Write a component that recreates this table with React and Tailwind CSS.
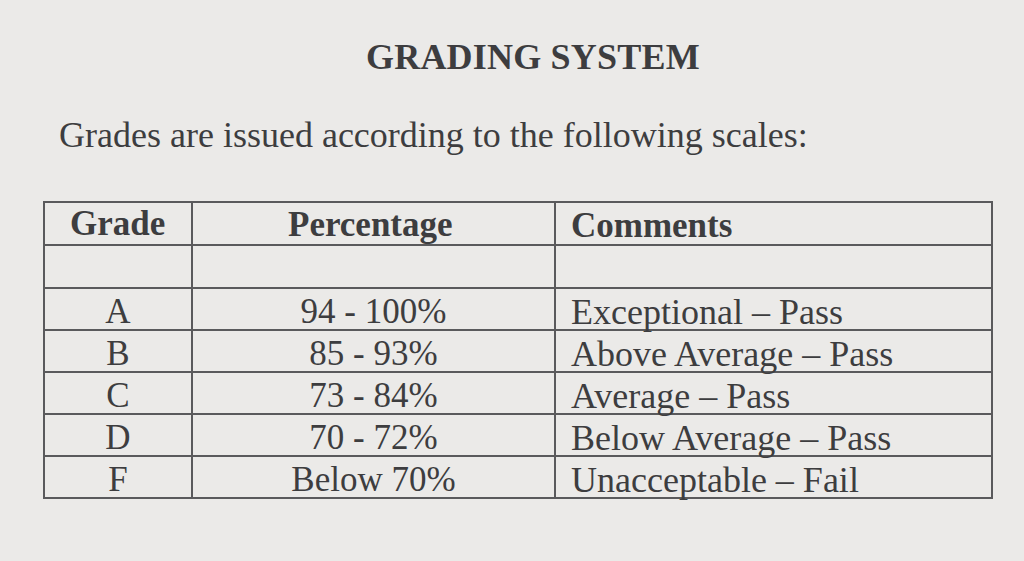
export default function App() {
  const rows = [
    ['A', '94 - 100%', 'Exceptional – Pass'],
    ['B', '85 - 93%', 'Above Average – Pass'],
    ['C', '73 - 84%', 'Average – Pass'],
    ['D', '70 - 72%', 'Below Average – Pass'],
    ['F', 'Below 70%', 'Unacceptable – Fail'],
  ]

  return (
    <div
      className="w-[1024px] h-[561px] overflow-hidden bg-[#ebeae8] text-[#3d3d3f]"
      style={{ fontFamily: '"Liberation Serif", "Times New Roman", serif' }}
    >
      <h1 className="pt-[35px] pl-[366px] text-[36px] leading-[44px] font-bold tracking-[0.2px]">
        GRADING SYSTEM
      </h1>
      <p className="mt-[36px] pl-[59px] text-[36px] leading-[40px]">
        Grades are issued according to the following scales:
      </p>
      <table className="mt-[46px] ml-[43px] w-[950px] border-collapse">
        <thead>
          <tr className="h-[43px]">
            <th className="w-[148px] border-2 border-[#5a5a5c] pl-[25px] text-left align-top pt-[3px] text-[35px] leading-[36px] font-bold">
              Grade
            </th>
            <th className="w-[363px] border-2 border-[#5a5a5c] pl-[95px] text-left align-top pt-[4px] text-[35px] leading-[36px] font-bold">
              Percentage
            </th>
            <th className="border-2 border-[#5a5a5c] pl-[15px] text-left align-top pt-[5px] text-[35px] leading-[36px] font-bold">
              Comments
            </th>
          </tr>
        </thead>
        <tbody>
          <tr className="h-[43px]">
            <td className="border-2 border-[#5a5a5c]"></td>
            <td className="border-2 border-[#5a5a5c]"></td>
            <td className="border-2 border-[#5a5a5c]"></td>
          </tr>
          {rows.map(([g, p, c]) => (
            <tr key={g} className="h-[42px]">
              <td className="border-2 border-[#5a5a5c] text-center align-top text-[35px] leading-[34px] pt-[6px]">{g}</td>
              <td className="border-2 border-[#5a5a5c] text-center align-top text-[35px] leading-[34px] pt-[6px]">{p}</td>
              <td className="border-2 border-[#5a5a5c] pl-[15px] align-top text-[36px] leading-[34px] pt-[6px] whitespace-nowrap">{c}</td>
            </tr>
          ))}
        </tbody>
      </table>
    </div>
  )
}
